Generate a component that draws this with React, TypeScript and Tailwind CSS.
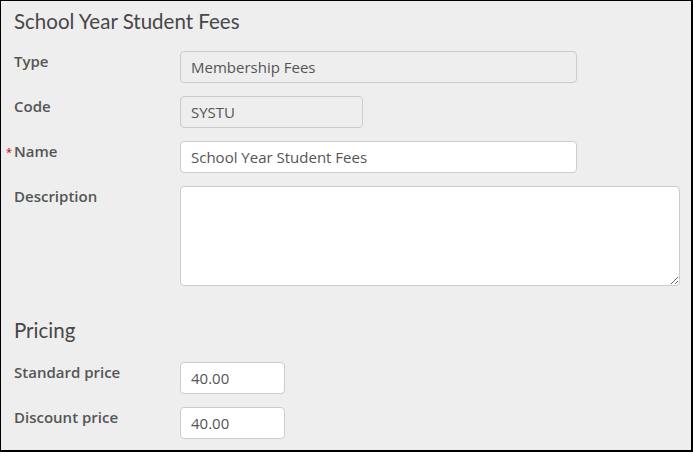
const labelCls = "relative text-[15px] leading-5 font-semibold text-[#555]"
const inputCls = "h-8 rounded border border-[#cccccc] px-[10px] text-[15px] text-[#555] outline-none"

function Row({ label, required, children }: { label: string; required?: boolean; children: React.ReactNode }) {
  return (
    <div className="grid grid-cols-[166px_1fr]">
      <div className={labelCls}>
        {required && <span className="absolute -left-[8px] top-[1px] text-[11px] text-[#e02020]">*</span>}
        {label}
      </div>
      <div>{children}</div>
    </div>
  )
}

export default function App() {
  return (
    <div
      className="h-[452px] w-[693px] border-t border-l border-r-2 border-b-2 border-black bg-[#eeeeee] pl-[13px]"
      style={{ fontFamily: '"Open Sans", "Liberation Sans", sans-serif' }}
    >
      <h1 className="pt-[6px] text-[20.5px] leading-7 text-[#474747]" style={{ fontFamily: 'Lato, "Noto Sans", sans-serif' }}>
        School Year Student Fees
      </h1>
      <div className="mt-[16px] flex flex-col gap-[13px]">
        <Row label="Type">
          <input className={inputCls + " w-[397px] bg-[#eeeeee]"} value="Membership Fees" disabled readOnly />
        </Row>
        <Row label="Code">
          <input className={inputCls + " w-[183px] bg-[#eeeeee]"} value="SYSTU" disabled readOnly />
        </Row>
        <Row label="Name" required>
          <input className={inputCls + " w-[397px] bg-white"} defaultValue="School Year Student Fees" />
        </Row>
        <Row label="Description">
          <textarea className="block h-[100px] w-[500px] rounded border border-[#cccccc] bg-white px-[10px] text-[15px] text-[#555] outline-none" />
        </Row>
      </div>
      <h2 className="mt-[30px] text-[20.5px] leading-7 text-[#474747]" style={{ fontFamily: 'Lato, "Noto Sans", sans-serif' }}>
        Pricing
      </h2>
      <div className="mt-[18px] flex flex-col gap-[13px]">
        <Row label="Standard price">
          <input className={inputCls + " w-[105px] bg-white"} defaultValue="40.00" />
        </Row>
        <Row label="Discount price">
          <input className={inputCls + " w-[105px] bg-white"} defaultValue="40.00" />
        </Row>
      </div>
    </div>
  )
}
